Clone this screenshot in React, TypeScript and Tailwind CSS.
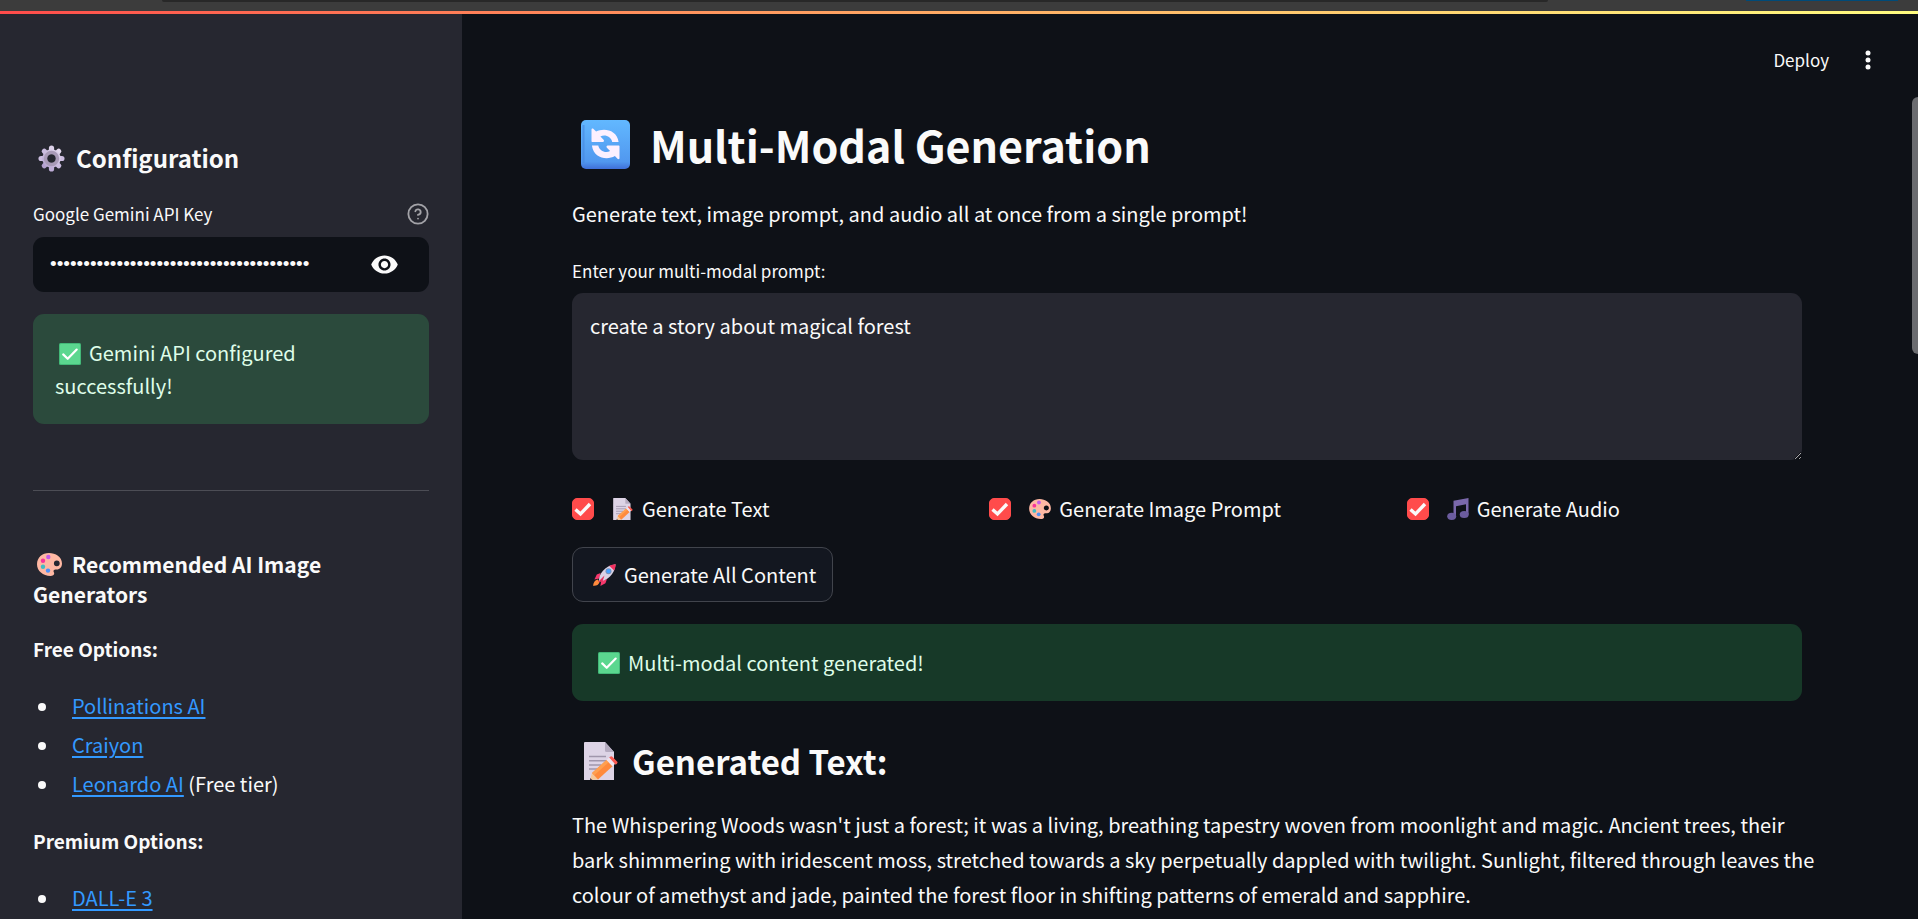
import { useState } from "react";
import type { ReactNode } from "react";

type IconProps = { className?: string };

function Gear({ className = "" }: IconProps) {
  return (
    <svg viewBox="0 0 28 28" className={className} aria-hidden="true">
      <defs>
        <linearGradient id="gearBody" x1="1" y1="0" x2="0" y2="1">
          <stop offset="0" stopColor="#e3d9ee" />
          <stop offset="1" stopColor="#b3a0cf" />
        </linearGradient>
      </defs>
      <g strokeWidth="5.400" strokeLinecap="round">
        <path d="M3.200 14H24.800" stroke="#cbbde0" />
        <path d="M6.500 6.500L21.500 21.500" stroke="#cbbde0" />
        <path d="M21.500 6.500L6.500 21.500" stroke="url(#gearBody)" />
        <path d="M14 3.200V8" stroke="#ddd2ea" />
        <path d="M14 20V24.800" stroke="#bfaed8" />
      </g>
      <circle cx="14" cy="14" r="9.600" fill="url(#gearBody)" />
      <circle cx="14" cy="14" r="6.200" fill="none" stroke="#a99bb8" strokeWidth="3.600" />
      <circle cx="14" cy="14" r="4.400" fill="#262730" />
    </svg>
  );
}

function GreenCheck({ className = "" }: IconProps) {
  return (
    <svg viewBox="0 0 22 22" className={className} aria-hidden="true">
      <rect width="22" height="22" rx="1.5" fill="#43b878" />
      <rect x="1" y="1" width="20" height="20" rx="1" fill="#5bd78f" />
      <path d="M4.200 11.400l4.500 4.400 9-9.200" fill="none" stroke="#fff" strokeWidth="2.200" strokeLinecap="round" strokeLinejoin="round" />
    </svg>
  );
}

function Palette({ className = "" }: IconProps) {
  return (
    <svg viewBox="0 0 25 23" className={className} aria-hidden="true">
      <path
        fillRule="evenodd"
        fill="#ffb8a3"
        d="M12 0C18.500 0 25 4 25 10.500c0 3.600-2.200 6-5.200 6-1.700 0-3.300.2-3.300 1.600 0 1 .7 1.500.7 2.500 0 1.600-1.600 2.400-3.700 2.400C6 23 0 18 0 11.300 0 4.500 5.200 0 12 0zm7.800 7.400a2.900 2.900 0 1 0 0 5.800 2.900 2.900 0 0 0 0-5.800z"
      />
      <circle cx="11.300" cy="4" r="2.200" fill="#c65be8" />
      <circle cx="6" cy="7.700" r="2.200" fill="#f9359b" />
      <circle cx="6" cy="13.700" r="2.200" fill="#42bcc4" />
      <circle cx="11" cy="17.600" r="2.200" fill="#4d92f7" />
    </svg>
  );
}

function Memo({ className = "" }: IconProps) {
  return (
    <svg viewBox="0 0 34 38" className={className} aria-hidden="true">
      <path d="M0 1a1 1 0 0 1 1-1h20l9 10v28H0z" fill="#ddd4e6" />
      <path d="M21 0l9 10h-7.500A1.500 1.500 0 0 1 21 8.500z" fill="#b5abc0" />
      <path d="M5 14.500h17M5 18.700h17M5 22.900h12M5 27.100h10" stroke="#a096ac" strokeWidth="1.500" />
      <path d="M8 31l6.500 6.500L6 38z" fill="#f5c89a" />
      <path d="M6 36l2.500 2H6z" fill="#56404a" />
      <path d="M8 31L22.500 18l6 6.200L14 37.500z" fill="#ff8a3c" />
      <path d="M8 31L22.500 18l2.200 2.200L10.300 33.300z" fill="#ffa050" />
      <path d="M22.500 18l2.700-2.400 6 6.200-2.700 2.400z" fill="#f0e4ee" />
      <path d="M25.200 15.600l.9-.8a1.800 1.800 0 0 1 2.500.1l4.400 4.600a1.500 1.500 0 0 1-.1 2.200l-1.200 1z" fill="#fb5a50" />
    </svg>
  );
}

function MusicNotes({ className = "" }: IconProps) {
  return (
    <svg viewBox="0 0 22 22" className={className} aria-hidden="true">
      <path d="M6.500 2.800L21.500 0v16.500h-2.500V6.300L9 8.300v10H6.500z" fill="#7a68ab" />
      <ellipse cx="4.700" cy="18.300" rx="4.500" ry="3.600" fill="#6b5c9e" />
      <ellipse cx="17.200" cy="16.500" rx="4.500" ry="3.600" fill="#6b5c9e" />
    </svg>
  );
}

function Rocket({ className = "" }: IconProps) {
  return (
    <svg viewBox="0 0 23 22" className={className} aria-hidden="true">
      <path d="M5 15.500c-2.500.3-4.600 2.500-5 6.200 3 .5 5.600-.8 6.500-3.500z" fill="#ff8a3c" />
      <path d="M7.500 9L3.800 10.600 1.400 15.600l5-1z" fill="#f7386c" />
      <path d="M14 15l-1.600 4.200-5 2.700.9-5.300z" fill="#f7386c" />
      <path d="M6 17.500C5.500 10 11.500 2 22.500.3 21.800 10.500 14 17 6 17.500z" fill="#d9d3e6" />
      <path d="M16.200 1.800C18 1 20.200.5 22.800.2c-.2 2.500-.8 4.600-1.700 6.300z" fill="#f4305f" />
      <circle cx="15.500" cy="7.200" r="3" fill="#7f93b8" />
      <circle cx="15.500" cy="7.200" r="2.100" fill="#4aa3ff" />
      <path d="M5 18l6.500-6.500-2 6z" fill="#e8305f" />
    </svg>
  );
}

function RefreshTile({ className = "" }: IconProps) {
  return (
    <svg viewBox="0 0 49 49" className={className} aria-hidden="true">
      <defs>
        <linearGradient id="tile" x1="0" y1="0" x2="0" y2="1">
          <stop offset="0" stopColor="#62b8ff" />
          <stop offset="0.850" stopColor="#5198ef" />
          <stop offset="1" stopColor="#3f6fd8" />
        </linearGradient>
      </defs>
      <rect width="49" height="49" rx="5" fill="url(#tile)" />
      <path d="M2.500 5v38" stroke="#4587e0" strokeWidth="2" opacity=".6" />
      <path
        fill="#fcf0ff"
        d="M10.500 9.600c0-1.300 1.200-1.500 2-.7l2.600 2.700C22.500 7.500 36 9.500 37.600 22h-6.400c-1-5.300-7.300-8.200-11.800-5.500l3.200 3.300c.8.900.4 2.200-.9 2.200H11.200a.7.700 0 0 1-.7-.7z"
      />
      <path
        fill="#fcf0ff"
        d="M38.500 38c0 1.300-1.200 1.500-2 .7l-2.600-2.700C26.500 40.500 12.500 38.500 10.900 25.500h6.400c1 5.300 7.300 8.200 11.800 5.500l-3.200-3.300c-.8-.9-.4-2.200.9-2.200h11a.7.700 0 0 1 .7.700z"
      />
    </svg>
  );
}

function Eye({ className = "" }: IconProps) {
  return (
    <svg viewBox="0 0 24 24" className={className} fill="#fafafa" aria-hidden="true">
      <path d="M12 4.500C7 4.500 2.730 7.610 1 12c1.730 4.390 6 7.500 11 7.500s9.270-3.110 11-7.500c-1.730-4.390-6-7.500-11-7.500zM12 17c-2.760 0-5-2.240-5-5s2.240-5 5-5 5 2.240 5 5-2.240 5-5 5zm0-8c-1.660 0-3 1.340-3 3s1.340 3 3 3 3-1.340 3-3-1.340-3-3-3z" />
    </svg>
  );
}

function Help({ className = "" }: IconProps) {
  return (
    <svg
      viewBox="0 0 24 24"
      className={className}
      fill="none"
      stroke="#a3a3a8"
      strokeWidth="2"
      strokeLinecap="round"
      strokeLinejoin="round"
      aria-hidden="true"
    >
      <circle cx="12" cy="12" r="10.500" />
      <path d="M9.090 9a3 3 0 0 1 5.830 1c0 2-3 3-3 3" />
      <path d="M12 17h.01" />
    </svg>
  );
}

function Option({ id, icon, label }: { id: string; icon: ReactNode; label: string }) {
  const [checked, setChecked] = useState(true);
  return (
    <div className="flex h-8 items-center">
      <span className="grid size-[22px] shrink-0">
        <input
          id={id}
          type="checkbox"
          checked={checked}
          onChange={(e) => setChecked(e.target.checked)}
          className="peer col-start-1 row-start-1 size-[22px] appearance-none rounded-[5px] border border-[#41444c] checked:border-[#ff4b4b] checked:bg-[#ff4b4b]"
        />
        <svg
          viewBox="0 0 22 22"
          className="pointer-events-none invisible col-start-1 row-start-1 size-[22px] peer-checked:visible"
          aria-hidden="true"
        >
          <path d="M3.500 11.500l5 4.500L18 6" fill="none" stroke="#fafafa" strokeWidth="3.400" />
        </svg>
      </span>
      <label htmlFor={id} className="flex items-center gap-[3px] pl-[13px]">
        <span className="flex w-8 shrink-0 justify-center">{icon}</span>
        {label}
      </label>
    </div>
  );
}

function ToolLink({ name, href, note }: { name: string; href: string; note?: string }) {
  return (
    <li className="pl-3">
      <a href={href} className="text-[#3399ff] underline decoration-2 underline-offset-[3px]">
        {name}
      </a>
      {note ? ` ${note}` : ""}
    </li>
  );
}

function Sidebar() {
  const [visible, setVisible] = useState(false);
  return (
    <aside className="w-[462px] shrink-0 overflow-hidden bg-[#262730] px-[33px] pt-[126px]">
      <h2 className="flex h-9 items-center text-2xl font-bold">
        <span className="flex w-[43px] items-center pl-[5px]">
          <Gear className="size-[27px]" />
        </span>
        Configuration
      </h2>
      <div className="mt-6 flex h-[27px] items-center justify-between text-[17px]">
        <label htmlFor="api-key">Google Gemini API Key</label>
        <button type="button" aria-label="Help">
          <Help className="size-[22px]" />
        </button>
      </div>
      <div className="mt-[10px] flex h-[55px] items-center rounded-[11px] bg-[#0e1117] pr-[30px] pl-[17px]">
        <input
          id="api-key"
          type={visible ? "text" : "password"}
          defaultValue="your-gemini-api-key-goes-in-this-field-"
          className="min-w-0 flex-1 bg-transparent font-['Liberation_Sans',sans-serif] text-[19px] outline-none"
        />
        <button type="button" aria-label="Show password" onClick={() => setVisible(!visible)}>
          <Eye className="size-[29px]" />
        </button>
      </div>
      <div role="status" className="mt-[22px] rounded-[11px] bg-[#2b4a3c] p-[22px] text-xl leading-[33px] text-[#dffde9]">
        <GreenCheck className="mr-2 ml-1 inline-block size-[22px] align-[-4px]" />
        Gemini API configured successfully!
      </div>
      <hr className="mt-[66px] border-[#4c4d55]" />
      <h3 className="mt-[58px] text-[21px] leading-[30px] font-bold">
        <Palette className="mr-[10px] ml-1 inline-block h-[23px] w-[25px] align-[-3px]" />
        Recommended AI Image Generators
      </h3>
      <p className="mt-[22px] text-[19px] leading-[35px] font-bold">Free Options:</p>
      <ul className="mt-[22px] flex list-disc flex-col gap-1 pl-[27px] text-xl leading-[35px]">
        <ToolLink name="Pollinations AI" href="https://pollinations.ai" />
        <ToolLink name="Craiyon" href="https://www.craiyon.com" />
        <ToolLink name="Leonardo AI" href="https://leonardo.ai" note="(Free tier)" />
      </ul>
      <p className="mt-[22px] text-[19px] leading-[35px] font-bold">Premium Options:</p>
      <ul className="mt-[22px] flex list-disc flex-col gap-1 pl-[27px] text-xl leading-[35px]">
        <ToolLink name="DALL-E 3" href="https://openai.com/dall-e-3" />
      </ul>
    </aside>
  );
}

export default function App() {
  return (
    <div className="flex h-screen flex-col overflow-hidden bg-[#0e1117] font-['Noto_Sans_CJK_SC',sans-serif] text-xl text-[#fafafa] scheme-dark">
      <div className="flex h-[11px] shrink-0 items-start bg-[#3c3c3c] pr-5 pl-[162px]">
        <div className="h-[2px] max-w-[1386px] flex-1 rounded-b-full bg-[#282828]" />
        <div className="ml-auto h-px w-[152px] bg-[#004a77]" />
      </div>
      <div className="h-[3px] shrink-0 bg-linear-to-r from-[#ff4b4b] to-[#fffd80]" />
      <div className="flex min-h-0 flex-1">
        <Sidebar />
        <div className="relative min-w-0 flex-1 overflow-hidden">
          <header className="flex h-[92px] items-center justify-end pr-[38px]">
            <button type="button" className="text-[17px]">
              Deploy
            </button>
            <button type="button" aria-label="Main menu" className="ml-[27px]">
              <svg viewBox="0 0 24 24" className="size-6" fill="#fafafa" aria-hidden="true">
                <circle cx="12" cy="5" r="2.500" />
                <circle cx="12" cy="12" r="2.500" />
                <circle cx="12" cy="19" r="2.500" />
              </svg>
            </button>
          </header>
          <main className="pr-[116px] pl-[110px]">
            <h1 className="flex h-[76px] items-center text-[43px] font-bold">
              <RefreshTile className="mr-5 ml-[9px] size-[49px] shrink-0" />
              Multi-Modal Generation
            </h1>
            <p className="mt-[14px] leading-[35px]">
              Generate text, image prompt, and audio all at once from a single prompt!
            </p>
            <label htmlFor="prompt" className="mt-[26px] block text-[17px] leading-[27px]">
              Enter your multi-modal prompt:
            </label>
            <textarea
              id="prompt"
              defaultValue="create a story about magical forest"
              className="mt-[9px] block h-[167px] w-full rounded-[11px] bg-[#262730] px-[18px] py-4 text-xl leading-[33px] outline-none"
            />
            <div className="mt-[33px] grid grid-cols-3 gap-[22px]">
              <Option id="gen-text" label="Generate Text" icon={<Memo className="h-[22px] w-5" />} />
              <Option id="gen-image" label="Generate Image Prompt" icon={<Palette className="h-5 w-[22px]" />} />
              <Option id="gen-audio" label="Generate Audio" icon={<MusicNotes className="size-[22px]" />} />
            </div>
            <button
              type="button"
              className="mt-[22px] flex h-[55px] items-center rounded-[11px] border border-[#41444c] bg-[#131720] px-4"
            >
              <Rocket className="mr-2 ml-1 h-[22px] w-[23px]" />
              Generate All Content
            </button>
            <div role="status" className="mt-[22px] flex items-center rounded-[11px] bg-[#173928] p-[22px] leading-[33px] text-[#dffde9]">
              <GreenCheck className="mr-2 ml-1 size-[22px]" />
              Multi-modal content generated!
            </div>
            <h2 className="mt-9 flex h-12 items-center text-[33px] font-bold">
              <Memo className="mr-[14px] ml-3 h-[38px] w-[34px]" />
              Generated Text:
            </h2>
            <p className="mt-[22px] leading-[35px] whitespace-nowrap">
              The Whispering Woods wasn't just a forest; it was a living, breathing tapestry woven from moonlight and
              magic. Ancient trees, their
              <br />
              bark shimmering with iridescent moss, stretched towards a sky perpetually dappled with twilight. Sunlight,
              filtered through leaves the
              <br />
              colour of amethyst and jade, painted the forest floor in shifting patterns of emerald and sapphire.
            </p>
          </main>
          <div className="absolute top-[83px] right-0 h-[257px] w-1.5 rounded-l-md bg-[#6b6c70]" aria-hidden="true" />
        </div>
      </div>
    </div>
  );
}
